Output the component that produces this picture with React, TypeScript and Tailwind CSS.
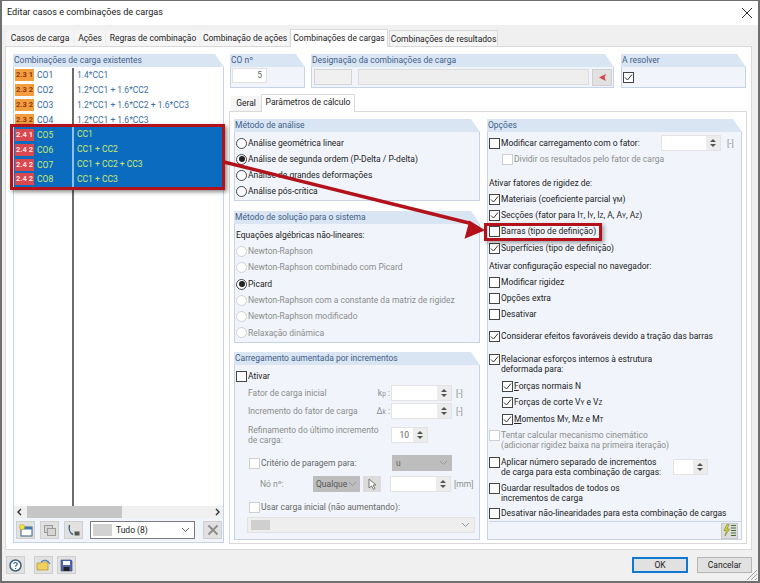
import React from 'react';

const Check = ({ on, off }: { on?: boolean; off?: boolean }) => (
  <span className={`flex w-[11px] h-[11px] shrink-0 items-center justify-center border bg-white ${off ? 'border-[#cfcfcf]' : 'border-[#444]'}`}>
    {on && (
      <svg width="9" height="9" viewBox="0 0 9 9" fill="none" stroke="#333" strokeWidth="1">
        <path d="M1 4.5 L3.5 7 L8 1.5" />
      </svg>
    )}
  </span>
);

const Radio = ({ on, off }: { on?: boolean; off?: boolean }) => (
  <span className={`flex w-[11px] h-[11px] shrink-0 items-center justify-center rounded-full border bg-white ${off ? 'border-[#d0d0d0]' : 'border-[#444]'}`}>
    {on && <span className="w-[6px] h-[6px] rounded-full bg-[#222]" />}
  </span>
);

const Group = ({ title, className, children }: { title: string; className: string; children?: React.ReactNode }) => (
  <div className={`flex flex-col ${className}`}>
    <div className="h-[13px] shrink-0 pl-[1px] bg-[#dae5f4] text-[#3f5f88] leading-[13px] whitespace-nowrap [clip-path:polygon(0_0,calc(100%-9px)_0,100%_100%,0_100%)]">{title}</div>
    <div className="flex flex-col flex-1 min-h-0 bg-[#f1f5fb] border-x border-b border-[#c6d3e7]">{children}</div>
  </div>
);

const Spin = ({ className, value }: { className: string; value?: string }) => (
  <div className={`flex items-stretch bg-white border border-[#e3e3e3] ${className}`}>
    <span className="flex-1 text-right pr-[4px] text-[#666] leading-[14px]">{value}</span>
    <span className="flex flex-col items-center justify-center gap-[2px] w-[14px] bg-[#ececec]">
      <span className="w-0 h-0 border-x-[3px] border-x-transparent border-b-[3px] border-b-[#555]" />
      <span className="w-0 h-0 border-x-[3px] border-x-transparent border-t-[3px] border-t-[#555]" />
    </span>
  </div>
);

const Chevron = ({ color = '#666' }: { color?: string }) => (
  <svg width="9" height="6" viewBox="0 0 9 6" fill="none" stroke={color} strokeWidth="1">
    <path d="M1 1 L4.5 4.5 L8 1" />
  </svg>
);

const Sub = ({ children }: { children: React.ReactNode }) => <span className="text-[6.5px]">{children}</span>;

const rows = [
  ['2.3 1', 'CO1', '1.4*CC1', false],
  ['2.3 2', 'CO2', '1.2*CC1 + 1.6*CC2', false],
  ['2.3 2', 'CO3', '1.2*CC1 + 1.6*CC2 + 1.6*CC3', false],
  ['2.3 2', 'CO4', '1.2*CC1 + 1.6*CC3', false],
  ['2.4 1', 'CO5', 'CC1', true],
  ['2.4 2', 'CO6', 'CC1 + CC2', true],
  ['2.4 2', 'CO7', 'CC1 + CC2 + CC3', true],
  ['2.4 2', 'CO8', 'CC1 + CC3', true],
] as const;

const ToolBtn = ({ children, className }: { children: React.ReactNode; className: string }) => (
  <div className={`flex items-center justify-center h-[18px] bg-[#e1e1e1] border border-[#cfcfcf] ${className}`}>{children}</div>
);

export default function App() {
  return (
    <div className="relative w-[760px] h-[583px] overflow-hidden bg-[#f0f0f0] border border-x-2 border-b-2 border-[#6f6f6f] text-[#222] text-[8.5px] font-['Roboto',sans-serif]">
      {/* Title bar */}
      <div className="flex items-center justify-between h-[24px] bg-white pl-[5px] pr-[6px] text-[9.1px]">
        <span>Editar casos e combinações de cargas</span>
        <svg width="10" height="10" viewBox="0 0 10 10" stroke="#333" strokeWidth="1">
          <path d="M0 0 L10 10 M10 0 L0 10" />
        </svg>
      </div>

      {/* Tabs */}
      <div className="flex items-end h-[21px] pl-[5px] gap-[2px] whitespace-nowrap">
        <div className="w-[66px] h-[16px] bg-[#f5f5f5] text-center leading-[17px]">Casos de carga</div>
        <div className="w-[30px] h-[16px] bg-[#f5f5f5] text-center leading-[17px]">Ações</div>
        <div className="w-[92px] h-[16px] bg-[#f5f5f5] text-center leading-[17px]">Regras de combinação</div>
        <div className="w-[88px] h-[16px] bg-[#f5f5f5] text-center leading-[17px]">Combinação de ações</div>
        <div className="relative z-10 w-[98px] h-[18px] -mx-[1px] -mb-[1px] bg-white border-x border-t border-[#d9d9d9] text-center leading-[16px]">Combinações de cargas</div>
        <div className="w-[109px] h-[16px] bg-[#f5f5f5] border border-b-0 border-[#d9d9d9] text-center leading-[16px]">Combinações de resultados</div>
      </div>

      {/* Main panel */}
      <div className="flex gap-[6px] w-[747px] h-[504px] ml-[3px] pl-[7px] pt-[7px] bg-white border border-[#d9d9d9]">
        {/* Left column */}
        <Group title="Combinações de carga existentes" className="w-[211px] h-[489px] shrink-0">
          <div className="flex flex-col flex-1 min-h-0 pt-[1px] bg-white">
            {rows.map(([tag, name, formula, sel]) => (
              <div key={name} className={`flex h-[14.86px] items-stretch leading-[14px] ${sel ? 'bg-[#0b6cbf]' : ''}`}>
                <div className={`flex items-center w-[60px] shrink-0 pl-[1px] border-r-2 ${sel ? 'border-[#8fc0ea] text-[#cde96c]' : 'border-[#6b6b6b] text-[#2f66a8]'}`}>
                  <span className={`w-[19px] h-[12px] mr-[3px] text-center text-[7.5px] font-bold leading-[12px] whitespace-nowrap ${sel ? 'bg-[#d9474f] text-[#ffe0e0]' : 'bg-[#f49d3e] text-[#8c3a10]'}`}>{tag}</span>
                  {name}
                </div>
                <div className={`pl-[3px] whitespace-nowrap ${sel ? 'text-[#cde96c]' : 'text-[#3d6fa6]'}`}>{formula}</div>
              </div>
            ))}
            <div className="flex-1"><div className="w-[60px] h-full border-r-2 border-[#6b6b6b]" /></div>
            <div className="flex items-center h-[12px] bg-[#f0f0f0] pl-[3px] pr-[3px] text-[#333]">
              <svg width="5" height="8" viewBox="0 0 5 8" fill="none" stroke="#333" strokeWidth="1.4"><path d="M4 1 L1 4 L4 7" /></svg>
              <div className="w-[95px] h-full ml-[5px] bg-[#c6c6c6]" />
              <div className="flex-1" />
              <svg width="5" height="8" viewBox="0 0 5 8" fill="none" stroke="#333" strokeWidth="1.4"><path d="M1 1 L4 4 L1 7" /></svg>
            </div>
          </div>
          <div className="flex items-center h-[24px] shrink-0 pl-[2px] gap-[5px]">
            <ToolBtn className="w-[19px]">
              <svg width="14" height="13" viewBox="0 0 14 13">
                <rect x="2" y="3" width="11" height="9" fill="#fff" stroke="#3b5f7f" />
                <rect x="2" y="3" width="11" height="2.5" fill="#3d7ab0" />
                <circle cx="3" cy="3" r="2.6" fill="#f2e04b" stroke="#b8a020" strokeWidth=".5" />
              </svg>
            </ToolBtn>
            <ToolBtn className="w-[19px]">
              <svg width="14" height="13" viewBox="0 0 14 13" fill="#d5d5d5" stroke="#9a9a9a">
                <rect x="1.5" y="1.5" width="8" height="7" />
                <rect x="4.5" y="4.5" width="8" height="7" />
              </svg>
            </ToolBtn>
            <ToolBtn className="w-[19px]">
              <svg width="14" height="13" viewBox="0 0 14 13" fill="none" stroke="#3b5f7f" strokeWidth="1.4">
                <path d="M2.5 1 C1.5 5 3 9 6 10.5" />
                <rect x="7.5" y="7.5" width="5" height="4" fill="#555" stroke="none" />
              </svg>
            </ToolBtn>
            <div className="flex items-center w-[105px] h-[18px] ml-[2px] pl-[2px] pr-[4px] bg-white border border-[#7a7a7a]">
              <span className="w-[19px] h-[12px] bg-[#d2d2d2]" />
              <span className="flex-1 pl-[4px]">Tudo (8)</span>
              <Chevron />
            </div>
            <ToolBtn className="w-[19px] ml-[3px] bg-[#d2d2d2]">
              <svg width="12" height="12" viewBox="0 0 12 12" stroke="#8e8e8e" strokeWidth="2">
                <path d="M1.5 1.5 L10.5 10.5 M10.5 1.5 L1.5 10.5" />
              </svg>
            </ToolBtn>
          </div>
        </Group>

        {/* Right column */}
        <div className="flex flex-col w-[518px] shrink-0 -ml-[1px]">
          <div className="flex h-[34px] gap-[6px] pl-[1px]">
            <Group title="CO nº" className="w-[75px]">
              <div className="w-[35px] h-[15px] mt-[1px] ml-[1px] bg-white border border-[#e0e0e0] text-right pr-[4px] text-[#666] leading-[13px]">5</div>
            </Group>
            <Group title="Designação da combinações de carga" className="w-[303px]">
              <div className="flex items-center h-full pl-[2px] gap-[6px]">
                <div className="w-[38px] h-[16px] bg-[#f0f0f0] border border-[#d4d4d4]" />
                <div className="flex-1 h-[16px] bg-[#eeeeee] border border-[#dcdcdc]" />
                <div className="flex items-center justify-center w-[20px] h-[17px] -ml-[3px] mr-[1px] bg-[#e1e1e1] border border-[#cfcfcf]">
                  <svg width="9" height="9" viewBox="0 0 9 9"><path d="M1 4.5 L8 1 L6.5 4.5 L8 8 Z" fill="#d8404a" /></svg>
                </div>
              </div>
            </Group>
            <Group title="A resolver" className="w-[125px] ml-[1px]">
              <div className="flex items-center h-full pl-[1px]"><Check on /></div>
            </Group>
          </div>

          {/* Inner tabs */}
          <div className="flex items-end h-[23px] pl-[2px] whitespace-nowrap">
            <div className="w-[30px] h-[15px] bg-[#f5f5f5] text-center leading-[15px]">Geral</div>
            <div className="relative z-10 w-[94px] h-[18px] -mb-[1px] bg-white border-x border-t border-[#d9d9d9] text-center leading-[15px]">Parâmetros de cálculo</div>
          </div>

          <div className="flex gap-[7px] h-[433px] w-[518px] pl-[4px] pt-[7px] border border-[#d9d9d9]">
            {/* Analysis groups */}
            <div className="flex flex-col w-[246px] shrink-0">
              <Group title="Método de análise" className="h-[82px]">
                <div className="flex flex-col pt-[3px] pl-[1px]">
                  <div className="flex items-center gap-[1px] h-[16px]"><Radio /> Análise geométrica linear</div>
                  <div className="flex items-center gap-[1px] h-[16px]"><Radio on /> Análise de segunda ordem (P-Delta / P-delta)</div>
                  <div className="flex items-center gap-[1px] h-[16px]"><Radio /> Análise de grandes deformações</div>
                  <div className="flex items-center gap-[1px] h-[16px]"><Radio /> Análise pós-crítica</div>
                </div>
              </Group>
              <Group title="Método de solução para o sistema" className="h-[132px] mt-[10px]">
                <div className="flex flex-col pt-[3px] pl-[1px]">
                  <div className="flex items-center h-[16.3px]">Equações algébricas não-lineares:</div>
                  <div className="flex items-center gap-[1px] h-[16.3px] text-[#8c8c8c]"><Radio off /> Newton-Raphson</div>
                  <div className="flex items-center gap-[1px] h-[16.3px] text-[#8c8c8c]"><Radio off /> Newton-Raphson combinado com Picard</div>
                  <div className="flex items-center gap-[1px] h-[16.3px]"><Radio on /> Picard</div>
                  <div className="flex items-center gap-[1px] h-[16.3px] text-[#8c8c8c]"><Radio off /> Newton-Raphson com a constante da matriz de rigidez</div>
                  <div className="flex items-center gap-[1px] h-[16.3px] text-[#8c8c8c]"><Radio off /> Newton-Raphson modificado</div>
                  <div className="flex items-center gap-[1px] h-[16.3px] text-[#8c8c8c]"><Radio off /> Relaxação dinâmica</div>
                </div>
              </Group>
              <Group title="Carregamento aumentada por incrementos" className="h-[188px] mt-[9px]">
                <div className="flex flex-col pt-[3px] pl-[1px] text-[#8c8c8c]">
                  <div className="flex items-center gap-[1px] h-[16px] text-[#222]"><Check /> Ativar</div>
                  <div className="flex items-center h-[18px] pl-[12px]">
                    <span className="w-[123px]">Fator de carga inicial</span>
                    <span className="w-[19px] text-right">k<Sub>p</Sub> :</span>
                    <Spin className="w-[61px] h-[16px] ml-[1px]" />
                    <span className="ml-[4px]">[-]</span>
                  </div>
                  <div className="flex items-center h-[18px] pl-[12px]">
                    <span className="w-[123px] whitespace-nowrap">Incremento do fator de carga</span>
                    <span className="w-[19px] text-right">Δ<Sub>k</Sub> :</span>
                    <Spin className="w-[61px] h-[16px] ml-[1px]" />
                    <span className="ml-[4px]">[-]</span>
                  </div>
                  <div className="flex items-center h-[26px] mt-[2px] pl-[12px]">
                    <span className="w-[143px] pr-[12px] leading-[10px]">Refinamento do último incremento de carga:</span>
                    <Spin className="w-[37px] h-[16px]" value="10" />
                  </div>
                  <div className="flex items-center gap-[1px] h-[18px] mt-[6px] pl-[13px]">
                    <Check off /> <span className="w-[130px] text-[#666]">Critério de paragem para:</span>
                    <div className="flex items-center justify-between w-[60px] h-[16px] pl-[4px] pr-[4px] bg-[#bdbdbd] text-[#666]">u <Chevron color="#999" /></div>
                  </div>
                  <div className="flex items-center h-[18px] mt-[3px] pl-[24px]">
                    <span className="w-[53px]">Nó nº:</span>
                    <div className="flex items-center justify-between w-[47px] h-[16px] pl-[3px] pr-[3px] bg-[#bdbdbd] text-[#555] overflow-hidden">Qualque <Chevron color="#999" /></div>
                    <div className="flex items-center justify-center w-[18px] h-[16px] ml-[3px] bg-[#dcdcdc]">
                      <svg width="10" height="12" viewBox="0 0 10 12"><path d="M2 1 L2 10 L4.5 8 L6.5 11.5 L8 10.5 L6 7 L9 7 Z" fill="#fff" stroke="#777" /></svg>
                    </div>
                    <Spin className="w-[61px] h-[16px] ml-[9px]" />
                    <span className="ml-[3px]">[mm]</span>
                  </div>
                  <div className="flex items-center gap-[1px] h-[18px] mt-[5px] pl-[13px]">
                    <Check off /> <span className="text-[#666]">Usar carga inicial (não aumentando):</span>
                  </div>
                  <div className="flex items-center justify-between w-[228px] h-[16px] mt-[1px] ml-[11px] pl-[3px] pr-[4px] bg-[#eeeeee] border border-[#e2e2e2]">
                    <span className="w-[19px] h-[10px] bg-[#cfcfcf]" />
                    <Chevron color="#999" />
                  </div>
                </div>
              </Group>
            </div>

            {/* Options */}
            <Group title="Opções" className="w-[255px] h-[421px]">
              <div className="flex flex-col flex-1 pt-[3px] pl-[1px]">
                <div className="flex items-center gap-[1px] h-[16px]">
                  <Check /> <span className="w-[159px]">Modificar carregamento com o fator:</span>
                  <Spin className="w-[60px] h-[16px]" />
                  <span className="ml-[5px] text-[#8c8c8c]">[-]</span>
                </div>
                <div className="flex items-center gap-[1px] h-[17px] pl-[13px] text-[#8c8c8c]"><Check off /> Dividir os resultados pelo fator de carga</div>
                <div className="flex items-center h-[15px] mt-[8px]">Ativar fatores de rigidez de:</div>
                <div className="flex items-center gap-[1px] h-[16px]"><Check on /> <span>Materiais (coeficiente parcial γ<Sub>M</Sub>)</span></div>
                <div className="flex items-center gap-[1px] h-[16px]"><Check on /> <span>Secções (fator para I<Sub>T</Sub>, I<Sub>Y</Sub>, I<Sub>Z</Sub>, A, A<Sub>Y</Sub>, A<Sub>Z</Sub>)</span></div>
                <div className="flex items-center gap-[1px] h-[16px]"><Check /> Barras (tipo de definição)</div>
                <div className="flex items-center gap-[1px] h-[16px] mt-[1px]"><Check on /> Superfícies (tipo de definição)</div>
                <div className="flex items-center h-[16px] mt-[2px]">Ativar configuração especial no navegador:</div>
                <div className="flex items-center gap-[1px] h-[16px]"><Check /> Modificar rigidez</div>
                <div className="flex items-center gap-[1px] h-[16px]"><Check /> Opções extra</div>
                <div className="flex items-center gap-[1px] h-[16px]"><Check /> Desativar</div>
                <div className="flex items-center gap-[1px] h-[16px] mt-[6px]"><Check on /> Considerar efeitos favoráveis devido a tração das barras</div>
                <div className="flex gap-[1px] h-[20px] mt-[10px] leading-[10px]">
                  <Check on />
                  <span className="w-[170px]">Relacionar esforços internos à estrutura deformada para:</span>
                </div>
                <div className="flex items-center gap-[1px] h-[16px] mt-[4px] pl-[13px]"><Check on /> <span><u>F</u>orças normais N</span></div>
                <div className="flex items-center gap-[1px] h-[16px] pl-[13px]"><Check on /> <span>Forças de corte V<Sub>Y</Sub> e V<Sub>Z</Sub></span></div>
                <div className="flex items-center gap-[1px] h-[16px] mt-[1px] pl-[13px]"><Check on /> <span><u>M</u>omentos M<Sub>Y</Sub>, M<Sub>Z</Sub> e M<Sub>T</Sub></span></div>
                <div className="flex gap-[1px] h-[20px] mt-[3px] leading-[10px] text-[#8c8c8c]">
                  <Check off />
                  <span className="w-[175px]">Tentar calcular mecanismo cinemático (adicionar rigidez baixa na primeira iteração)</span>
                </div>
                <div className="flex gap-[1px] h-[20px] mt-[7px] leading-[10px]">
                  <Check />
                  <span className="w-[171px]">Aplicar número separado de incrementos<br />de carga para esta combinação de cargas:</span>
                  <Spin className="w-[35px] h-[16px] mt-[2px]" />
                </div>
                <div className="flex gap-[1px] h-[20px] mt-[6px] leading-[10px]">
                  <Check />
                  <span className="w-[125px]">Guardar resultados de todos os incrementos de carga</span>
                </div>
                <div className="flex items-center gap-[1px] h-[16px] mt-[2px] whitespace-nowrap"><Check /> Desativar não-linearidades para esta combinação de cargas</div>
                <div className="flex items-center justify-end flex-1 pr-[3px] border-t border-[#c6d3e7]">
                  <div className="flex items-center justify-center w-[17px] h-[16px] bg-[#dcdcdc] border border-[#c8c8c8]">
                    <svg width="14" height="13" viewBox="0 0 14 13">
                      <path d="M4 0.5 L1 6.5 L3.5 6.5 L2 12 L6.5 5 L4 5 L6 0.5 Z" fill="#e6d21e" stroke="#5f8a2a" strokeWidth=".6" />
                      <path d="M8 1.5 H13 M8 4 H13 M8 6.5 H13 M8 9 H13 M8 11.5 H13" stroke="#4a6a3a" strokeWidth="1.2" />
                    </svg>
                  </div>
                </div>
              </div>
            </Group>
          </div>
        </div>
      </div>

      {/* Footer */}
      <div className="flex items-center h-[30px] pl-[4px] pr-[6px]">
        <ToolBtn className="w-[19px]">
          <svg width="13" height="13" viewBox="0 0 13 13">
            <circle cx="6.5" cy="6.5" r="5.5" fill="#fff" stroke="#3b5f7f" strokeWidth="1.5" />
            <path d="M4.8 5 C4.8 3 8.2 3 8.2 5 C8.2 6.2 6.5 6.2 6.5 7.8 M6.5 9 V10" fill="none" stroke="#3b5f7f" strokeWidth="1.2" />
          </svg>
        </ToolBtn>
        <ToolBtn className="w-[19px] ml-[9px]">
          <svg width="15" height="13" viewBox="0 0 15 13">
            <path d="M1 4 H5 L6 3 H12 V11 H1 Z" fill="#f0d060" stroke="#b09030" strokeWidth=".7" />
            <path d="M5 3 C8 0 12 1 14 5" fill="none" stroke="#4a80b8" strokeWidth="1.2" />
          </svg>
        </ToolBtn>
        <ToolBtn className="w-[19px] ml-[4px]">
          <svg width="13" height="13" viewBox="0 0 13 13">
            <path d="M1 1 H11 L12 2 V12 H1 Z" fill="#5568a8" stroke="#2f3f78" strokeWidth=".6" />
            <rect x="3" y="2" width="7" height="4" fill="#fff" />
            <rect x="3.5" y="8" width="6" height="4" fill="#222" />
          </svg>
        </ToolBtn>
        <div className="flex-1" />
        <div className="flex items-center justify-center w-[56px] h-[16px] bg-[#e1e1e1] border-2 border-[#0f78d0]">OK</div>
        <div className="flex items-center justify-center w-[55px] h-[16px] ml-[9px] bg-[#e1e1e1] border border-[#b5b5b5]">Cancelar</div>
      </div>

      {/* Red callouts over the dialog */}
      <div className="absolute left-[8px] top-[123px] w-[215px] h-[66px] border-[3px] border-[#b3121b] shadow-[2px_2px_4px_rgba(0,0,0,0.45)]" />
      <div className="absolute left-[482px] top-[222px] w-[118px] h-[18px] border-[3px] border-[#b3121b] shadow-[2px_2px_4px_rgba(0,0,0,0.35)]" />
      <svg className="absolute left-0 top-0" width="760" height="583" viewBox="0 0 760 583">
        <path d="M222 161 L467 222" stroke="#b3121b" strokeWidth="3.5" fill="none" />
        <path d="M481 229 L464 236 L468 221 Z" fill="#b3121b" stroke="#b3121b" strokeWidth="2" />
        <path d="M745 579 L755 569 M749 579 L755 573 M753 579 L755 577" stroke="#a0a0a0" strokeWidth="1" />
      </svg>
    </div>
  );
}
